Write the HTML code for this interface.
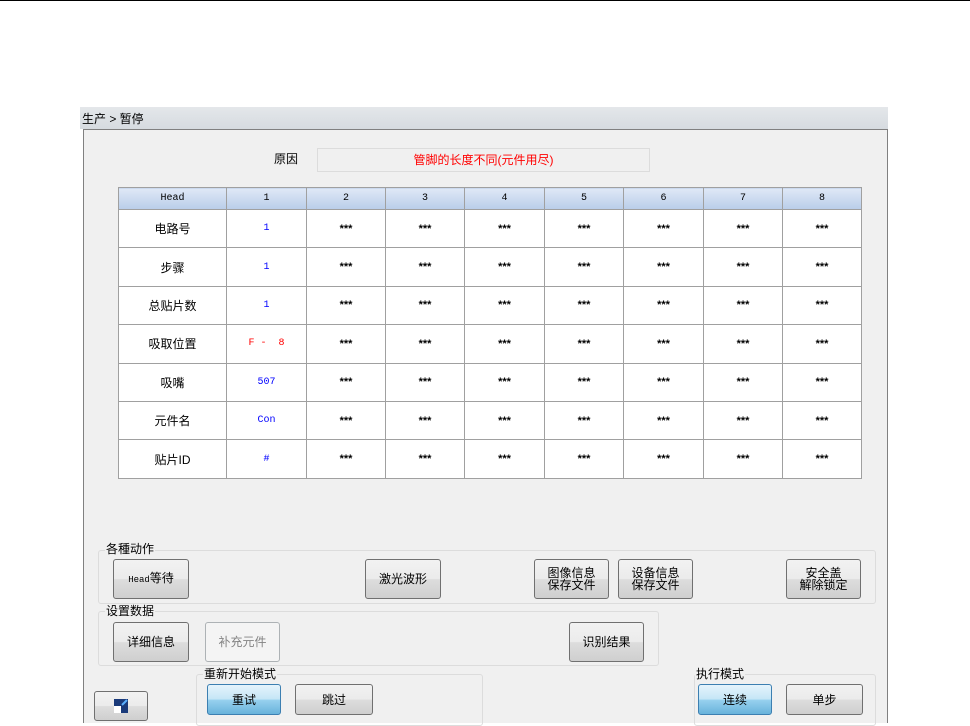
<!DOCTYPE html>
<html><head><meta charset="utf-8"><style>
*{box-sizing:border-box;margin:0;padding:0}
body{width:970px;height:723px;background:#fff;position:relative;overflow:hidden;font-family:"Liberation Sans","Noto Sans CJK SC",sans-serif;font-size:12px;color:#000}
.a{position:absolute}
.title{left:80px;top:107px;width:808px;height:22px;background:linear-gradient(#e4e7ea,#d6dbe0);padding:3px 2px;font-size:12px}
.panel{left:83px;top:129px;width:805px;height:594px;background:#f0f0f0;border:1px solid #808080;border-bottom:none}
table{position:absolute;left:118px;top:187px;border-collapse:collapse;background:#fff}
td{border:1px solid #a0a0a0;text-align:center;font-size:11px}
tr.h td{background:linear-gradient(#dfe8f6,#b9cde9);height:22px;font-family:"Liberation Mono","Noto Sans CJK SC",monospace;font-size:10px}
tr.r td{height:38.4px;font-weight:bold}
tr.r td:first-child{font-weight:normal;font-size:12px}
.b{color:#00f;font-weight:normal!important;font-family:"Liberation Mono",monospace;font-size:10px}
.rd{color:#f00;font-weight:normal!important;font-family:"Liberation Mono",monospace;font-size:10px}
.grp{position:absolute;border:1px solid #dcdcdc;border-radius:3px}
.gt{position:absolute;background:#f0f0f0;padding:0 1px;font-size:12px;line-height:13px}
.btn{position:absolute;border:1px solid #707070;border-radius:3px;background:linear-gradient(#f2f2f2 0%,#ebebeb 50%,#dddddd 51%,#cfcfcf 100%);display:flex;align-items:center;justify-content:center;text-align:center;font-size:12px;line-height:12px}
.sel{background:linear-gradient(#e5f4fc 0%,#c4e5f6 50%,#98d1ef 51%,#68b3db 100%);border-color:#3c7fb1}
.dis{background:#f4f4f4;border-color:#adb2b5;color:#838383}
</style></head><body>
<div class="a" style="left:0;top:0;width:970px;height:1px;background:#000"></div>
<div class="a title">生产 &gt; 暂停</div>
<div class="a panel"></div>
<div class="a" style="left:274px;top:150px;font-size:12px">原因</div>
<div class="a" style="left:317px;top:148px;width:333px;height:24px;border:1px solid #dcdcdc;background:#f0f0f0;color:#f00;text-align:center;line-height:22px;font-size:12px">管脚的长度不同(元件用尽)</div>
<table>
<tr class="h"><td style="width:108px">Head</td><td style="width:80px">1</td><td style="width:79px">2</td><td style="width:79px">3</td><td style="width:80px">4</td><td style="width:79px">5</td><td style="width:80px">6</td><td style="width:79px">7</td><td style="width:79px">8</td></tr>
<tr class="r"><td>电路号</td><td class="b">1</td><td>***</td><td>***</td><td>***</td><td>***</td><td>***</td><td>***</td><td>***</td></tr>
<tr class="r"><td>步骤</td><td class="b">1</td><td>***</td><td>***</td><td>***</td><td>***</td><td>***</td><td>***</td><td>***</td></tr>
<tr class="r"><td>总贴片数</td><td class="b">1</td><td>***</td><td>***</td><td>***</td><td>***</td><td>***</td><td>***</td><td>***</td></tr>
<tr class="r"><td>吸取位置</td><td class="rd">F -&nbsp;&nbsp;8</td><td>***</td><td>***</td><td>***</td><td>***</td><td>***</td><td>***</td><td>***</td></tr>
<tr class="r"><td>吸嘴</td><td class="b">507</td><td>***</td><td>***</td><td>***</td><td>***</td><td>***</td><td>***</td><td>***</td></tr>
<tr class="r"><td>元件名</td><td class="b">Con</td><td>***</td><td>***</td><td>***</td><td>***</td><td>***</td><td>***</td><td>***</td></tr>
<tr class="r"><td>贴片ID</td><td class="b">#</td><td>***</td><td>***</td><td>***</td><td>***</td><td>***</td><td>***</td><td>***</td></tr>
</table>
<div class="grp" style="left:98px;top:550px;width:778px;height:54px"></div>
<div class="gt" style="left:105px;top:543px">各種动作</div>
<div class="btn" style="left:113px;top:559px;width:76px;height:40px"><span><span style="font-family:'Liberation Mono';font-size:9px">Head</span>等待</span></div>
<div class="btn" style="left:365px;top:559px;width:76px;height:40px">激光波形</div>
<div class="btn" style="left:534px;top:559px;width:75px;height:40px">图像信息<br>保存文件</div>
<div class="btn" style="left:618px;top:559px;width:75px;height:40px">设备信息<br>保存文件</div>
<div class="btn" style="left:786px;top:559px;width:75px;height:40px">安全盖<br>解除锁定</div>
<div class="grp" style="left:98px;top:611px;width:561px;height:55px"></div>
<div class="gt" style="left:105px;top:605px">设置数据</div>
<div class="btn" style="left:113px;top:622px;width:76px;height:40px">详细信息</div>
<div class="btn dis" style="left:205px;top:622px;width:75px;height:40px">补充元件</div>
<div class="btn" style="left:569px;top:622px;width:75px;height:40px">识别结果</div>
<div class="grp" style="left:196px;top:674px;width:287px;height:52px"></div>
<div class="gt" style="left:203px;top:668px">重新开始模式</div>
<div class="btn sel" style="left:207px;top:684px;width:74px;height:31px">重试</div>
<div class="btn" style="left:295px;top:684px;width:78px;height:31px">跳过</div>
<div class="grp" style="left:694px;top:674px;width:182px;height:52px"></div>
<div class="gt" style="left:695px;top:668px">执行模式</div>
<div class="btn sel" style="left:698px;top:684px;width:74px;height:31px">连续</div>
<div class="btn" style="left:786px;top:684px;width:77px;height:31px">单步</div>
<div class="btn" style="left:94px;top:691px;width:54px;height:30px"><svg width="14" height="14"><rect x="0" y="0" width="14" height="14" fill="#1a3a7a"/><rect x="0" y="7" width="7" height="7" fill="#fff"/><path d="M8 6 L13 1" stroke="#5ab0ff" stroke-width="2"/></svg></div>
</body></html>
